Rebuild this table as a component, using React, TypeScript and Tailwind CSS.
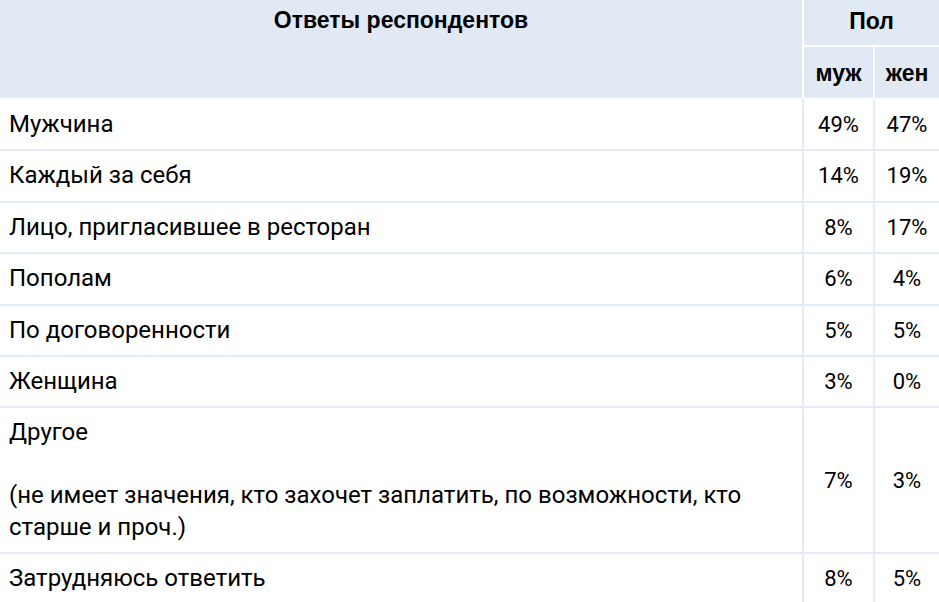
import React from 'react';

type Row = { label: React.ReactNode; m: string; f: string };

const ROWS: Row[] = [
  { label: 'Мужчина', m: '49%', f: '47%' },
  { label: 'Каждый за себя', m: '14%', f: '19%' },
  { label: 'Лицо, пригласившее в ресторан', m: '8%', f: '17%' },
  { label: 'Пополам', m: '6%', f: '4%' },
  { label: 'По договоренности', m: '5%', f: '5%' },
  { label: 'Женщина', m: '3%', f: '0%' },
  {
    label: (
      <>
        Другое
        <br />
        <br />
        (не имеет значения, кто захочет заплатить, по возможности, кто старше и проч.)
      </>
    ),
    m: '7%',
    f: '3%',
  },
  { label: 'Затрудняюсь ответить', m: '8%', f: '5%' },
];

const App: React.FC = () => {
  return (
    <div className="w-[939px] bg-white text-black font-['Roboto',sans-serif]">
      <table className="w-full border-separate border-spacing-0 table-fixed">
        <colgroup>
          <col className="w-[802px]" />
          <col className="w-[71px]" />
          <col className="w-[66px]" />
        </colgroup>
        <thead className="font-['Liberation_Sans',Arial,sans-serif] font-bold text-[23px] leading-[26px]">
          <tr>
            <th rowSpan={2} className="bg-[#e1e9f5] align-top pt-[7px] text-center">
              Ответы респондентов
            </th>
            <th colSpan={2} className="bg-[#e1e9f5] border-l-2 border-b-2 border-white h-[47px] pb-[4px] text-center align-middle">
              Пол
            </th>
          </tr>
          <tr>
            <th className="bg-[#e1e9f5] border-l-2 border-white h-[51px] text-center">муж</th>
            <th className="bg-[#e1e9f5] border-l-2 border-white text-center">жен</th>
          </tr>
        </thead>
        <tbody className="leading-[31.4px]">
          {ROWS.map((r, i) => (
            <tr key={i}>
              <td className={`${i === 0 ? 'border-white' : 'border-[#e3ebf6]'} border-t-2 py-[9px] pl-[9px] pr-[50px] align-middle text-[24px]`}>
                {r.label}
              </td>
              <td className={`${i === 0 ? 'border-t-white' : 'border-t-[#e3ebf6]'} border-t-2 border-l-2 border-l-[#e3ebf6] text-center align-middle text-[22px]`}>
                {r.m}
              </td>
              <td className={`${i === 0 ? 'border-t-white' : 'border-t-[#e3ebf6]'} border-t-2 border-l-2 border-l-[#e3ebf6] text-center align-middle text-[22px]`}>
                {r.f}
              </td>
            </tr>
          ))}
        </tbody>
      </table>
    </div>
  );
};

export default App;
